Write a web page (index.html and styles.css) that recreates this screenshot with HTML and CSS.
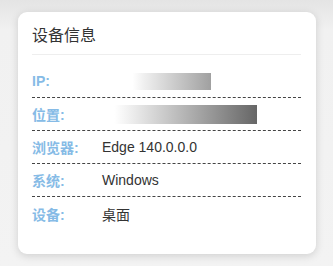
FILE: index.html
```html
<!DOCTYPE html>
<html lang="zh-CN">
<head>
    <meta charset="UTF-8">
    <meta name="viewport" content="width=device-width, initial-scale=1.0">
    <title>设备信息</title>
    <link rel="stylesheet" href="styles.css">
</head>
<body>
    <div class="info-card">
        <div class="card-title">设备信息</div>
        <div class="info-list">
            <div class="info-row">
                <span class="info-label">IP:</span>
                <span class="info-value"><span class="mask mask-ip"></span></span>
            </div>
            <div class="info-row">
                <span class="info-label">位置:</span>
                <span class="info-value"><span class="mask mask-location"></span></span>
            </div>
            <div class="info-row">
                <span class="info-label">浏览器:</span>
                <span class="info-value">Edge 140.0.0.0</span>
            </div>
            <div class="info-row">
                <span class="info-label">系统:</span>
                <span class="info-value">Windows</span>
            </div>
            <div class="info-row">
                <span class="info-label">设备:</span>
                <span class="info-value">桌面</span>
            </div>
        </div>
    </div>
</body>
</html>
```

FILE: styles.css
```css
* {
    margin: 0;
    padding: 0;
    box-sizing: border-box;
    font-family: 'Liberation Sans', 'Noto Sans CJK SC', sans-serif;
}

body {
    padding: 12px 17px 12px 18px;
    background: linear-gradient(#e4e4e4, #f1f1f1 30px, #f3f3f3);
    min-height: 100vh;
}

.info-card {
    background: white;
    border-radius: 9px;
    box-shadow: 0 2px 8px rgba(0,0,0,0.15);
    height: 242px;
    padding: 14px 15px 14px 14px;
}

.card-title {
    font-size: 16px;
    line-height: 20px;
    color: #333;
    padding-bottom: 8px;
    border-bottom: 1px solid #eeeeee;
}

.info-list {
    margin-top: 10px;
}

.info-row {
    display: flex;
    align-items: center;
    height: 33px;
    border-bottom: 1px dashed #444;
}

.info-row:last-child {
    border-bottom: none;
}

.info-label {
    width: 70px;
    font-size: 14px;
    font-weight: 600;
    color: #86bbe6;
}

.info-value {
    display: flex;
    align-items: center;
    font-size: 14px;
    color: #333;
}

.mask {
    display: inline-block;
}

.mask-ip {
    width: 109px;
    height: 17px;
    background: linear-gradient(to right, #fff 28%, #f0f0f0 38%, #a0a0a0);
}

.mask-location {
    width: 155px;
    height: 19px;
    background: linear-gradient(to right, #fff 8%, #ececec 20%, #666);
}
```
